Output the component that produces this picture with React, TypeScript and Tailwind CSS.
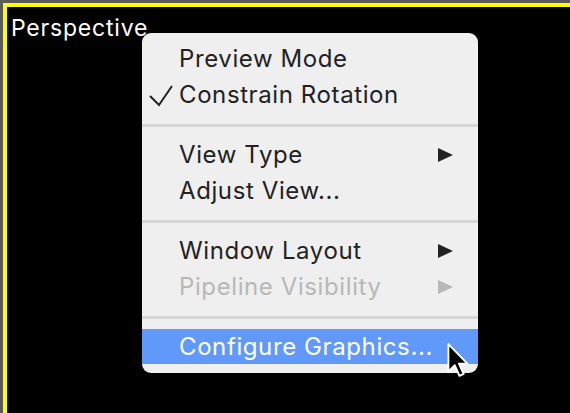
import React from "react";

type Item =
  | { kind: "item"; label: string; checked?: boolean; submenu?: boolean; disabled?: boolean; active?: boolean }
  | { kind: "sep" };

const items: Item[] = [
  { kind: "item", label: "Preview Mode" },
  { kind: "item", label: "Constrain Rotation", checked: true },
  { kind: "sep" },
  { kind: "item", label: "View Type", submenu: true },
  { kind: "item", label: "Adjust View..." },
  { kind: "sep" },
  { kind: "item", label: "Window Layout", submenu: true },
  { kind: "item", label: "Pipeline Visibility", submenu: true, disabled: true },
  { kind: "sep" },
  { kind: "item", label: "Configure Graphics...", active: true },
];

const Check = () => (
  <svg width="26" height="22" viewBox="0 0 26 22" className="absolute left-[6px] top-[8px]">
    <path d="M2 11 L11 20 L24 1" fill="none" stroke="#222" strokeWidth="2" />
  </svg>
);

const Arrow = ({ color }: { color: string }) => (
  <svg width="15" height="14" viewBox="0 0 15 14" className="absolute right-[25px] top-[11px]">
    <path d="M0 0 L15 7 L0 14 Z" fill={color} />
  </svg>
);

// mouse pointer resting over the highlighted item
const Cursor = () => (
  <svg width="28" height="38" viewBox="0 0 26 36" className="absolute left-[304px] top-[13px]">
    <path d="M2 2 L2 28 L8 22 L12.5 32 L16.5 30.3 L12 20.5 L20 20.5 Z" fill="#000" stroke="#fff" strokeWidth="1.8" strokeLinejoin="round" />
  </svg>
);

export default function App() {
  return (
    <div className="w-[570px] h-[413px] bg-[#5b5b5b] pl-[3px] pt-[3px] overflow-hidden">
      <div className="relative h-full border-l-4 border-t-4 border-[#ffff00] bg-black">
        <div className="pl-[4px] pt-[6px] text-[23px] leading-[30px] tracking-[0.8px] text-white font-['Inter',sans-serif]">
          Perspective
        </div>

        <div className="absolute left-[135px] top-[26px] w-[336px] rounded-[9px] bg-[#efefef] pt-[8px] pb-[9px] font-['Inter',sans-serif] text-[24px] tracking-[0.6px] shadow-[0_4px_14px_rgba(0,0,0,0.35)]">
          {items.map((it, i) =>
            it.kind === "sep" ? (
              <div key={i} className="h-[24px] flex items-center">
                <div className="h-[3px] w-full bg-[#d7d7d7]" />
              </div>
            ) : (
              <div
                key={i}
                className={
                  "relative pl-[37px] " +
                  (it.active ? "h-[35px] leading-[35px] bg-[#6199fb] text-white" : "h-[36px] leading-[36px] ") +
                  (it.disabled ? "text-[#b8b8b8]" : it.active ? "" : "text-[#222]")
                }
              >
                {it.checked && <Check />}
                {it.label}
                {it.submenu && <Arrow color={it.disabled ? "#b8b8b8" : "#222"} />}
                {it.active && <Cursor />}
              </div>
            )
          )}
        </div>
      </div>
    </div>
  );
}
